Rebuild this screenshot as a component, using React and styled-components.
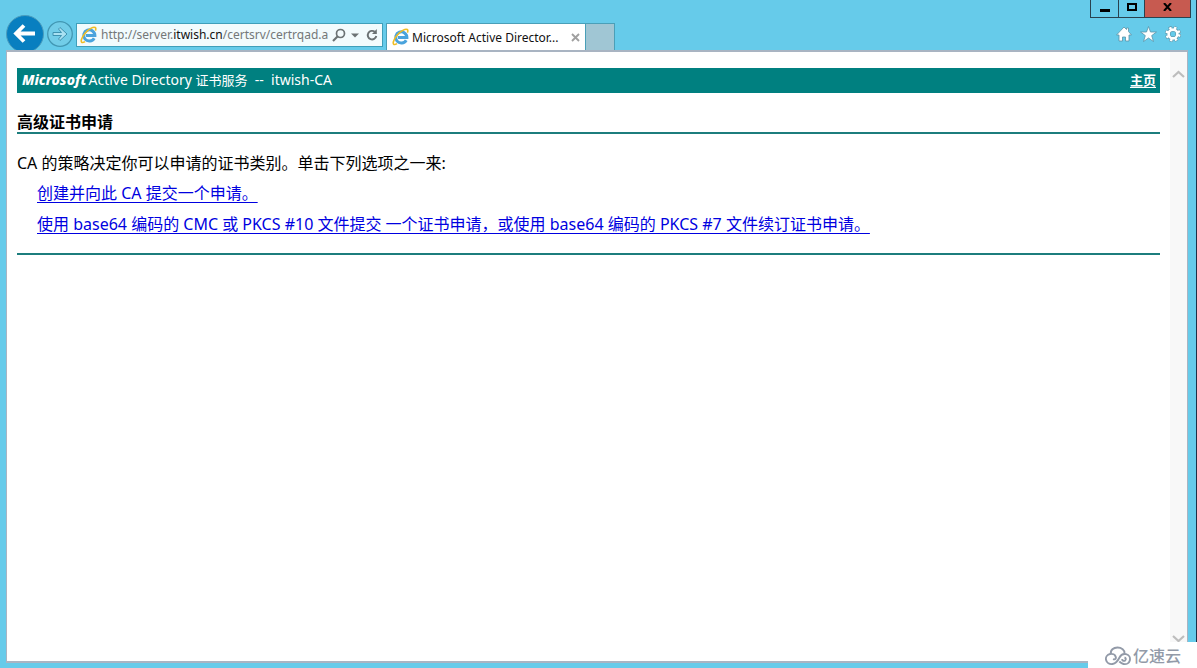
import React from "react";
import styled, { createGlobalStyle } from "styled-components";

const GlobalStyle = createGlobalStyle`
  * {
    box-sizing: border-box;
  }
  body {
    margin: 0;
    overflow: hidden;
    font-family: "Noto Sans", "Noto Sans CJK SC", sans-serif;
  }
  button {
    padding: 0;
    border: 0;
    background: transparent;
    font: inherit;
  }
  svg {
    display: block;
    flex: none;
  }
`;

const Window = styled.div`
  position: relative;
  display: flex;
  flex-direction: column;
  height: 100vh;
  padding: 0 8px 5px 6px;
  border-right: 1px solid #1f2f45;
  background: #66cbea;
`;

const Header = styled.header`
  display: flex;
  justify-content: space-between;
  height: 50px;
`;

const Toolbar = styled.div`
  display: flex;
  align-items: flex-end;
`;

const BackButton = styled.button`
  width: 38px;
  height: 35px;
  overflow: hidden;
`;

const ForwardButton = styled.button`
  width: 26px;
  height: 26px;
  margin: 0 3px;
  margin-bottom: 3px;
`;

const AddressBar = styled.form`
  display: flex;
  align-items: center;
  width: 307px;
  height: 24px;
  margin-bottom: 3px;
  padding: 0 4px 0 3px;
  border: 1px solid #3f9fba;
  background: #f2fbfd;
  color: #747878;
`;

const AddressText = styled.div`
  flex: 1;
  min-width: 0;
  margin-left: 3px;
  overflow: hidden;
  white-space: nowrap;
  font-size: 12px;
  line-height: 22px;
  outline: 0;

  b {
    font-weight: 400;
    color: #111;
  }
`;

const AddressButton = styled.button`
  flex: none;
  margin-left: ${(props) => props.$gap || 4}px;
  color: #6b7274;
`;

const Tabs = styled.div`
  display: flex;
  height: 27px;
  margin-left: 3px;
`;

const Tab = styled.div`
  display: flex;
  align-items: center;
  gap: 2px;
  width: 200px;
  padding: 0 5px;
  border: 1px solid #4a9fb8;
  border-bottom: 0;
  background: #fff;
  font-size: 12px;
  color: #111;
`;

const TabTitle = styled.span`
  flex: 1;
  white-space: nowrap;
`;

const NewTab = styled.button`
  width: 29px;
  border: 1px solid #4a9fb8;
  border-width: 1px 1px 0 0;
  background: #a0c6d4;
`;

const WindowSide = styled.div`
  display: flex;
  flex-direction: column;
  align-items: flex-end;
  justify-content: space-between;
`;

const WindowButtons = styled.div`
  display: flex;
  height: 18px;
  margin-right: -3px;
`;

const WindowButton = styled.button`
  display: flex;
  align-items: center;
  justify-content: center;
  width: ${(props) => props.$width}px;
  padding-bottom: 3px;
  border: 1px solid #29424f;
  border-width: 0 1px 1px 0;
  background: ${(props) => (props.$close ? "#c75a50" : "transparent")};

  &:first-child {
    border-left-width: 1px;
  }
`;

const Tools = styled.div`
  display: flex;
  gap: 8px;
  padding: 0 7px 8px;
`;

const Viewport = styled.div`
  flex: 1;
  display: flex;
  min-height: 0;
  border: 1px solid #a9b4c2;
  border-width: 2px 1px;
  background: #fff;
`;

const Page = styled.main`
  flex: 1;
  padding: 16px 10px;
`;

const ScrollBar = styled.div`
  display: flex;
  flex-direction: column;
  justify-content: space-between;
  align-items: center;
  width: 17px;
  padding: 18px 0;
  background: #f8f8f8;
`;

const Banner = styled.div`
  display: flex;
  justify-content: space-between;
  height: 25px;
  padding: 0 4px 0 5px;
  background: #008080;
  color: #fff;
  font-size: 13px;
  line-height: 24px;
  white-space: pre;

  a {
    color: #fff;
    font-weight: 700;
    text-underline-offset: 2px;
  }
`;

const Product = styled.span`
  font-size: 14px;

  span {
    font-size: 13px;
  }
`;

const Brand = styled.b`
  margin-right: 2px;
  font-weight: 800;
  font-style: italic;
`;

const Title = styled.h1`
  margin: 19px 0 17px;
  border-bottom: 2px solid #1c7d7d;
  font-size: 16px;
  line-height: 20px;
`;

const Text = styled.p`
  margin: 0;
  font-size: 16px;
  line-height: 24px;
`;

const Options = styled.ul`
  margin: 6px 0 17px;
  padding-left: 20px;
  list-style: none;
  font-size: 16px;
  line-height: 24px;

  li + li {
    margin-top: 7px;
  }
  a {
    color: #0000e0;
    text-decoration-thickness: 1px;
    text-underline-offset: 3px;
  }
`;

const Rule = styled.hr`
  height: 2px;
  margin: 0;
  border: 0;
  background: #1c7d7d;
`;

const Watermark = styled.div`
  position: absolute;
  right: -1px;
  bottom: 0;
  display: flex;
  align-items: center;
  justify-content: flex-end;
  gap: 2px;
  width: 109px;
  height: 26px;
  padding: 1px 16px 0 0;
  background: #fff;
  color: #929aa8;
  font-size: 16px;
  font-weight: 500;
  line-height: 24px;
`;

const IeLogo = () => (
  <svg width="18" height="18" viewBox="0 0 18 18" fill="none">
    <path
      d="M14.200 12.200A5.600 5.600 0 1 1 14.900 9.500H6"
      stroke="#4aa3dc"
      strokeWidth="3"
    />
    <path
      d="M5 15.600C2.400 17.400.7 16.600 1.400 13.700 2.400 9.900 6.900 4.300 11.200 2.100c3.900-2 5.400-.4 4.200 2.500"
      stroke="#efbd25"
      strokeWidth="1.600"
    />
  </svg>
);

const Chevron = ({ down }) => (
  <svg width="13" height="8" viewBox="0 0 13 8" fill="none">
    <path
      d={down ? "M1 1l5.500 5L12 1" : "M1 7l5.500-5L12 7"}
      stroke="#bdbdbd"
      strokeWidth="2.200"
    />
  </svg>
);

export default function App() {
  return (
    <Window>
      <GlobalStyle />
      <Header>
        <Toolbar>
          <BackButton aria-label="Back">
            <svg width="38" height="38" viewBox="0 0 38 38">
              <circle cx="19" cy="19" r="18.500" fill="#087fc0" stroke="#4c9dbd" />
              <path
                d="M29 18.500H11M18 10.500l-8 8 8 8"
                fill="none"
                stroke="#fff"
                strokeWidth="3.800"
              />
            </svg>
          </BackButton>
          <ForwardButton aria-label="Forward">
            <svg width="26" height="26" viewBox="0 0 26 26">
              <circle cx="13" cy="13" r="12.300" fill="#72cde8" stroke="#4297b3" strokeWidth="1.300" />
              <path
                d="M6 11.500h8.500L11.500 8l1.500-1.500L20 13l-7 6.500-1.500-1.500 3-3.500H6z"
                fill="#a9e1f2"
                stroke="#3e92b0"
              />
            </svg>
          </ForwardButton>
          <AddressBar onSubmit={(e) => e.preventDefault()}>
            <IeLogo />
            <AddressText
              role="textbox"
              aria-label="Address"
              contentEditable
              suppressContentEditableWarning
              spellCheck={false}
            >
              http://server.<b>itwish.cn</b>/certsrv/certrqad.a
            </AddressText>
            <AddressButton type="submit" aria-label="Search">
              <svg width="14" height="14" viewBox="0 0 14 14" fill="none" stroke="currentColor">
                <circle cx="8.500" cy="5.500" r="4" strokeWidth="1.700" />
                <path d="M5.500 8.500L1 13" strokeWidth="2.200" />
              </svg>
            </AddressButton>
            <AddressButton type="button" aria-label="Show history" $gap={5}>
              <svg width="8" height="5" viewBox="0 0 8 5" fill="currentColor">
                <path d="M0 .5h8L4 4.500z" />
              </svg>
            </AddressButton>
            <AddressButton type="button" aria-label="Refresh" $gap={7}>
              <svg width="12" height="14" viewBox="0 0 12 14" fill="none">
                <path
                  d="M8.800 3.800A4.300 4.300 0 1 0 10.300 8"
                  stroke="currentColor"
                  strokeWidth="1.900"
                />
                <path d="M10.800 1v5H6z" fill="currentColor" />
              </svg>
            </AddressButton>
          </AddressBar>
          <Tabs>
            <Tab>
              <IeLogo />
              <TabTitle>Microsoft Active Director...</TabTitle>
              <button aria-label="Close tab">
                <svg width="9" height="9" viewBox="0 0 9 9">
                  <path d="M1 1l7 7M8 1L1 8" stroke="#a0a0a0" strokeWidth="1.900" />
                </svg>
              </button>
            </Tab>
            <NewTab aria-label="New tab" />
          </Tabs>
        </Toolbar>

        <WindowSide>
          <WindowButtons>
            <WindowButton $width={29} aria-label="Minimize">
              <svg width="10" height="9" viewBox="0 0 10 9">
                <path d="M0 6h10v3H0z" />
              </svg>
            </WindowButton>
            <WindowButton $width={26} aria-label="Maximize">
              <svg width="10" height="8" viewBox="0 0 10 8" fill="none">
                <path d="M1 1h8v6H1z" stroke="#000" strokeWidth="2" />
              </svg>
            </WindowButton>
            <WindowButton $width={46} $close aria-label="Close">
              <svg width="9" height="8" viewBox="0 0 9 8">
                <path d="M1 0l7 8M8 0L1 8" stroke="#000" strokeWidth="2" />
              </svg>
            </WindowButton>
          </WindowButtons>
          <Tools>
            <button aria-label="Home">
              <svg width="16" height="16" viewBox="0 0 16 16">
                <path
                  d="M8 1l2.500 2.500V2h2v3.500L15.500 9H13v6H9.500v-4h-3v4H3V9H.5z"
                  fill="#fff"
                  stroke="#5a93a7"
                  strokeWidth=".8"
                />
              </svg>
            </button>
            <button aria-label="Favorites">
              <svg width="17" height="16" viewBox="0 0 17 16">
                <path
                  d="M8.500.5l2 5.500h6l-4.800 3.600 1.800 5.900-5-3.500-5 3.500 1.800-5.900L.5 6h6z"
                  fill="#fff"
                  stroke="#5a93a7"
                  strokeWidth=".8"
                />
              </svg>
            </button>
            <button aria-label="Tools">
              <svg width="16" height="16" viewBox="0 0 16 16" fill="none">
                <circle cx="8" cy="8" r="6.300" stroke="#5a93a7" strokeWidth="3.400" strokeDasharray="3.050 1.900" />
                <circle cx="8" cy="8" r="4.500" stroke="#5a93a7" strokeWidth="4" />
                <circle cx="8" cy="8" r="6.300" stroke="#fff" strokeWidth="2.400" strokeDasharray="2.350 2.600" strokeDashoffset="-.35" />
                <circle cx="8" cy="8" r="4.400" stroke="#fff" strokeWidth="2.600" />
              </svg>
            </button>
          </Tools>
        </WindowSide>
      </Header>

      <Viewport>
        <Page>
          <Banner>
            <Product>
              <Brand>Microsoft</Brand>
              Active Directory <span>证书服务</span>
              {"  --  itwish-CA"}
            </Product>
            <a href="#home">主页</a>
          </Banner>
          <Title>高级证书申请</Title>
          <Text>CA 的策略决定你可以申请的证书类别。单击下列选项之一来:</Text>
          <Options>
            <li>
              <a href="#create">创建并向此 CA 提交一个申请。</a>
            </li>
            <li>
              <a href="#submit">
                使用 base64 编码的 CMC 或 PKCS #10 文件提交 一个证书申请，或使用 base64
                编码的 PKCS #7 文件续订证书申请。
              </a>
            </li>
          </Options>
          <Rule />
        </Page>
        <ScrollBar>
          <Chevron />
          <Chevron down />
        </ScrollBar>
      </Viewport>

      <Watermark>
        <svg width="26" height="20" viewBox="0 0 26 20" fill="none" stroke="#929aa8" strokeWidth="1.900">
          <path d="M6 8C5 4 8.500 1.500 12.500 1.500S20 4 19.500 7.500" />
          <path d="M8 13.200c1.800.6 3.200-.5 2.800-2.200C10.200 8.500 7.500 7.500 5 8c-3 .6-4.500 3.200-4 5.800.6 3 3.500 4.700 6.500 4.200 4-.7 5.500-3.500 7-6.500 1.300-2.600 3.700-4 6.500-3.300 3 .8 4.500 3.500 3.800 6.200-.7 2.800-3.500 4.200-6.300 3.600-1.800-.4-3-1.400-4.200-2.500" />
          <path d="M17 13.200c.2 1.500 2 2.200 3.200 1.200 1-.9.700-2.400-.7-2.900" />
        </svg>
        <span>亿速云</span>
      </Watermark>
    </Window>
  );
}
